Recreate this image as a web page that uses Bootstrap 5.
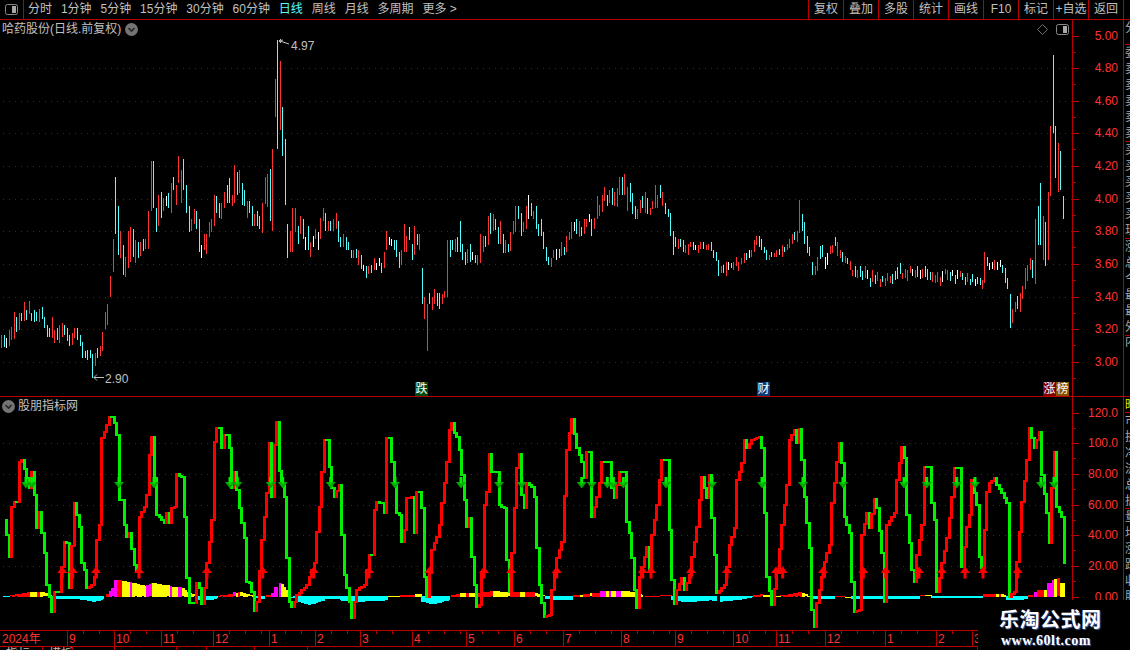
<!DOCTYPE html>
<html lang="zh-CN">
<head>
<meta charset="UTF-8">
<title>哈药股份</title>
<link href="https://cdn.jsdelivr.net/npm/bootstrap@5.3.3/dist/css/bootstrap.min.css" rel="stylesheet">
<style>
    html, body { background: #000; overflow: hidden; }
    body { font: 12px/1 "Liberation Sans", "Noto Sans CJK SC", sans-serif; color: #c0c0c0; }
    .app-root { width: 1130px; height: 650px; background: #000; }
    .tool-bar { height: 20px; border-bottom: 1px solid #b80000; }
    .corner-box { width: 24px; height: 19px; border-right: 1px solid #b80000; }
    .tool-item { line-height: 19px; white-space: nowrap; }
    .tool-left { gap: 8.9px; padding-left: 4px; }
    .tool-item.on { color: #54ffff; }
    .tool-right { margin-right: 6px; border-right: 1px solid #b80000; }
    .tool-btn { width: 35px; height: 19px; padding: 0; border: 0; border-left: 1px solid #b80000; border-radius: 0;
        font-size: 12px; line-height: 19px; color: #c0c0c0; background: #000; white-space: nowrap; }
    .price-pane { height: 377px; border-bottom: 1px solid #b80000; }
    .macd-pane { height: 234px; border-bottom: 1px solid #b80000; }
    .plot-wrap { width: 1073px; border-right: 1px solid #b80000; }
    .side-col { width: 7px; border-left: 1px solid #b80000; padding-left: 1px; overflow: hidden; white-space: nowrap; color: #a8a8a8; }
    .side-sec { border-bottom: 1px solid #b80000; overflow: hidden; }
    .side-sec div { height: 16px; line-height: 16px; }
    .side-head { color: #e6e600; }
    .pane-title { left: 2px; top: 3px; line-height: 13px; white-space: nowrap; }
    .round-tog { display: inline-block; vertical-align: -3px; margin-left: 4px; }
    .tog-first { margin: 0 3px 0 0; }
    .chart-icons { right: 3px; top: 4px; }
    .ev-tag { top: 362px; height: 14px; line-height: 14px; color: #fff; font-size: 12px; text-align: center; }
    .ev-cell { width: 13px; display: inline-block; vertical-align: top; }
    .ev-green { background: #004a10; }
    .ev-blue { background: #0a3c78; }
    .ev-red { background: #800000; }
    .ev-brown { background: #8a5000; }
    .date-row { width: 978px; height: 16px; border-bottom: 1px solid #b80000; }
    .stub-row { width: 978px; height: 4px; overflow: hidden; }
    .stub-cell { height: 4px; border-right: 1px solid #b80000; font-size: 12px; line-height: 14px; padding-left: 6px; overflow: hidden; white-space: nowrap; }
    .water-mark { left: 978px; top: 600px; width: 152px; height: 50px; background: #000; color: #fff; }
    .wm-cn { left: 21px; top: 7px; font: 700 20px/24px "Noto Sans CJK SC", sans-serif; letter-spacing: .5px; text-shadow: 1px 1px 1px #3a5a9a; white-space: nowrap; }
    .wm-en { left: 23px; top: 33px; font: 700 14px/16px "Liberation Serif", serif; letter-spacing: .5px; text-shadow: 1px 1px 1px #3a5a9a; white-space: nowrap; }
    svg text { font-family: "Liberation Sans", "Noto Sans CJK SC", sans-serif; font-size: 12px; }
</style>
</head>
<body>
<div class="app-root position-relative">
    <div class="tool-bar d-flex justify-content-between">
        <div class="d-flex">
            <div class="corner-box d-flex align-items-center justify-content-center">
                <svg width="13" height="11" viewBox="0 0 13 11"><rect x=".5" y=".5" width="12" height="10" rx="2" fill="#000" stroke="#8a8a8a"/><rect x="7" y="2" width="4" height="7" fill="#a8a8a8"/></svg>
            </div>
            <div class="d-flex tool-left">
                <span class="tool-item">分时</span>
                <span class="tool-item">1分钟</span>
                <span class="tool-item">5分钟</span>
                <span class="tool-item">15分钟</span>
                <span class="tool-item">30分钟</span>
                <span class="tool-item">60分钟</span>
                <span class="tool-item on">日线</span>
                <span class="tool-item">周线</span>
                <span class="tool-item">月线</span>
                <span class="tool-item">多周期</span>
                <span class="tool-item">更多 &gt;</span>
            </div>
        </div>
        <div class="d-flex tool-right">
            <button class="btn tool-btn">复权</button>
            <button class="btn tool-btn">叠加</button>
            <button class="btn tool-btn">多股</button>
            <button class="btn tool-btn">统计</button>
            <button class="btn tool-btn">画线</button>
            <button class="btn tool-btn">F10</button>
            <button class="btn tool-btn">标记</button>
            <button class="btn tool-btn">+自选</button>
            <button class="btn tool-btn">返回</button>
        </div>
    </div>

    <div class="price-pane d-flex">
        <div class="plot-wrap position-relative">
            <svg id="priceSvg" class="d-block" width="1072" height="376" viewBox="0 20 1072 376" shape-rendering="crispEdges"></svg>
            <div class="pane-title position-absolute">哈药股份(日线.前复权)<svg class="round-tog" width="13" height="13" viewBox="0 0 13 13"><circle cx="6.5" cy="6.5" r="6.5" fill="#747474"/><path d="M3.5 5l3 3 3-3" fill="none" stroke="#262626" stroke-width="1.6"/></svg></div>
            <div class="chart-icons position-absolute d-flex align-items-center gap-2">
                <svg width="11" height="11" viewBox="0 0 11 11"><path d="M5.5.5l5 5-5 5-5-5z" fill="none" stroke="#6e6e6e"/></svg>
                <svg width="13" height="11" viewBox="0 0 13 11"><rect x=".5" y=".5" width="12" height="10" rx="2" fill="#000" stroke="#8a8a8a"/><rect x="7" y="2" width="4" height="7" fill="#a8a8a8"/></svg>
            </div>
            <div class="ev-tag position-absolute" style="left:415px"><span class="ev-cell ev-green">跌</span></div>
            <div class="ev-tag position-absolute" style="left:757px"><span class="ev-cell ev-blue">财</span></div>
            <div class="ev-tag position-absolute" style="left:1043px"><span class="ev-cell ev-red">涨</span><span class="ev-cell ev-brown">榜</span></div>
        </div>
        <svg id="priceAxis" class="d-block" width="50" height="376" viewBox="1073 20 50 376" shape-rendering="crispEdges"></svg>
        <div class="side-col d-flex flex-column">
            <div class="side-sec" style="height:25px"><div>分笔</div></div>
            <div class="side-sec" style="height:97px"><div>委比</div><div>卖五</div><div>卖四</div><div>卖三</div><div>卖二</div><div>卖一</div></div>
            <div class="side-sec" style="height:97px"><div>买一</div><div>买二</div><div>买三</div><div>买四</div><div>买五</div><div>现价</div></div>
            <div class="side-sec" style="height:97px"><div>涨跌</div><div>总手</div><div>今开</div><div>最高</div><div>最低</div><div>外盘</div></div>
            <div><div>内盘</div></div>
        </div>
    </div>

    <div class="macd-pane d-flex">
        <div class="plot-wrap position-relative">
            <svg id="macdSvg" class="d-block" width="1072" height="233" viewBox="0 397 1072 233" shape-rendering="crispEdges"></svg>
            <div class="pane-title position-absolute"><svg class="round-tog tog-first" width="13" height="13" viewBox="0 0 13 13"><circle cx="6.5" cy="6.5" r="6.5" fill="#747474"/><path d="M3.5 5l3 3 3-3" fill="none" stroke="#262626" stroke-width="1.6"/></svg>股朋指标网</div>
        </div>
        <svg id="macdAxis" class="d-block" width="50" height="233" viewBox="1073 397 50 233" shape-rendering="crispEdges"></svg>
        <div class="side-col d-flex flex-column">
            <div class="side-sec" style="height:16px"><div class="side-head">昨收</div></div>
            <div class="side-sec" style="height:96px"><div>市盈</div><div>换手</div><div>净资</div><div>流通</div><div>总股</div><div>振幅</div></div>
            <div class="side-sec" style="height:96px"><div>量比</div><div>均价</div><div>涨停</div><div>跌停</div><div>收益</div><div>股本</div></div>
        </div>
    </div>

    <svg id="dateSvg" class="d-block date-row" width="978" height="16" viewBox="0 631 978 15" shape-rendering="crispEdges"></svg>
    <div class="stub-row d-flex">
        <div class="stub-cell" style="width:43px">指标</div>
        <div class="stub-cell" style="width:30px">模板</div>
        <div class="stub-cell" style="width:42px"></div>
        <div class="stub-cell" style="width:62px"></div>
        <div class="stub-cell" style="width:30px"></div>
        <div class="stub-cell" style="width:48px"></div>
        <div class="stub-cell" style="width:53px"></div>
        <div class="stub-cell" style="width:670px"></div>
    </div>

    <div class="water-mark position-absolute">
        <div class="wm-cn position-absolute">乐淘公式网</div>
        <div class="wm-en position-absolute">www.60lt.com</div>
    </div>
</div>

<script src="https://cdn.jsdelivr.net/npm/bootstrap@5.3.3/dist/js/bootstrap.bundle.min.js"></script>
<script>
    const RED = '#ff3232', CYAN = '#54ffff', WHITE = '#ffffff', LINE = '#b80000', GRID = '#a00000';
    const stickColor = { r: RED, c: CYAN, w: WHITE };

    // 价格柱：读自截图，"x 色 上-下"，坐标按放大 3 倍记
    function readBars(text, x0, y0) {
        return text.trim().split(/\s+/).map(t => {
            const m = t.match(/(\d+)([rcw])(\d+)-(\d+)/);
            return { x: Math.floor(+m[1] / 3 + x0), top: +m[3] / 3 + y0, bot: +m[4] / 3 + y0, c: stickColor[m[2]] };
        });
    }

    const barsA = readBars(`3r165-205 12c165-200 18w175-205 27r150-198 33r142-180 42r97-178 48c110-155 57r100-150 63c100-125 72r65-122 78c90-120 87r63-102 93c100-125 102c90-125 108c97-125 117r87-125 126c82-118 132c110-142 141c135-172 147c145-173 156r112-175 162r150-188 171c145-180 177r135-190 186r130-172 192c135-165 201c145-185 207c165-198 216r160-195 222r145-175 231c145-180 240c165-198 246c185-233 255c213-235 261c210-240 270c210-235 276c222-295 285r220-260 291c205-235 300r198-228 306r155-212`, 0, 280);
    const barsB = readBars(`45r845-895 52r822-885 60r738-800 70r628-728 76c440-610 85c528-675 91r603-683 100c645-735 106r682-743 115r603-713 121r590-695 130c597-682 136r630-698 145c635-683 151r637-680 160c628-665 166r628-657 175r543-657 184r393-543 190c393-535 199c533-605 205r495-587 214c487-565 220r505-545 229w498-527 235c490-535 244r458-548 250c440-480 259r465-525 265r378-458 274r420-518 280c387-480 289c465-550 298c528-605 304r567-603 313r538-582 319c543-597 328c567-665 334w645-683 343r612-660 349r612-673 358r575-620 364r567-605 373r495-587 379c498-550 388c520-565 394r520-567 403r487-535 412c465-520 418c443-518 427r495-527 433r405-520 442c427-497 448r420-490 457c460-525 463c480-527 472r513-563 478c513-550 487c528-587 493r552-587 502c543-587 508c558-597 517r520-610 526r440-520 532r433-533 541c418-573 547r357-603 556r148-263 562c30-357 571r93-300 577c232-378 586c328-525 592c582-683 601r603-665 607r535-668 616r535-607 625c588-642 631r558-612 640c567-628 646w620-660 655c588-660 661r635-680 670w618-650 676r597-627 685w605-660 691r565-627 700r535-575 706c550-603 715r573-603 721c573-603 730r567-603 739r548-597 745c573-635 751c620-650 760r612-650 769c622-660 775c635-660 784c660-683 790r660-683 799c657-683 805r660-705 814c675-718 820w705-723 829c708-743 835r708-733 844c705-730 853r683-720 859w698-720 868w683-708 874c698-728 883r665-713 889r603-660 898w622-647 904w628-650 913c630-660 919c630-680 928c665-713 934r660-705 943r582-665 949r618-665 958c590-630 967c642-690 973r588-675 982c612-645 988r612-660 997c714-822 1003r800-867 1012r822-963 1018c790-822 1027r800-838 1033r777-822 1042c790-828 1048c790-837 1057r793-822 1063r783-803 1072r630-800 1081c630-680 1087c630-660 1096r628-665 1102c622-667`, 90, 30);
    const barsC = readBars(`16r237-275 22c232-275 31c183-275 37c252-300 46c277-315 52r267-308 61c252-305 67w277-300 76c285-310 82r285-315 91r222-310 100r228-275 106c228-262 115r168-255 121c160-222 130r163-215 136c178-212 145c202-252 151r183-252 160c222-278 166r240-278 175c252-275 181r217-275 190r183-222 196r138-217 205c138-178 214c160-228 220r187-217 229r138-207 235w105-177 244c130-168 250r153-177 259c138-207 265c193-228 274c178-228 280c217-267 289c262-305 295c292-315 304r295-323 310r270-295 319w267-300 328c267-295 334r247-290 343c262-285 349r228-275 358r215-240 364r187-237 373w187-213 379c178-222 388r183-230 394c202-228 403r178-222 409r178-202 418w162-187 424c178-228 433r175-207 442r108-177 448r135-168 457r105-155 463r82-123 472c105-138 478r90-130 487c85-135 493r97-138 502r85-143 508r52-105 517c52-107 523r42-105 532r82-153 541c70-128 547c100-162 556c138-177 562r148-177 571r120-160 577c108-143 586r97-160 592c115-162 601r145-167 607r123-148 616r75-143 622r105-143 631c75-113 637r97-138 646c130-162 655c148-172 661c160-228 670c213-285 676c232-262 685r237-267 691c237-262 700c240-275 706r255-280 715r252-285 721r247-262 730c247-270 736w255-270 745r255-280 751r247-268 760c247-268 769r255-270 775r252-270 784c247-275 790c270-295 799c277-305 805c300-347 814r318-338 820c315-340 829r307-348 835w307-332 844c310-325 850r307-330 859r292-318 865r307-333 874r293-310 883r280-310 889c280-300 898w270-293 904r270-292 913r240-275 919r228-255 928c228-262 934c237-270 943c262-280 949c270-300 958r285-300 964c277-293 973r280-293 979r270-292 988c267-285 997r255-290 1003c262-277 1012r252-270 1018r237-265 1027r222-252 1033c217-240 1042r213-247 1048r120-220 1057c162-213 1063c187-252 1072c228-278 1078c262-290 1087c305-345 1096r318-345 1102r292-333`, 450, 160);
    const barsE = readBars(`7r720-747 13r636-728 22c652-678 28w670-690 37w665-685 43r660-690 52w665-690 61w660-680 67c675-698 76c685-730 82c715-747 91c762-863 97r807-848 106r785-815 112c768-807 121r758-815 127r738-778 136r683-745 142r675-722 151r655-690 157c660-713 166r537-732 175c497-614 181c430-615 190r528-660 196c546-678 205r456-660 211r258-467 220c45-280 226c258-413 235r310-458 241c333-450 250c468-537`, 980, 40);

    // 820 到 981 这一段只按包络走
    const envelope = [[820, 238, 268], [825, 246, 272], [830, 238, 264], [835, 234, 262], [840, 243, 268], [845, 252, 272], [850, 258, 277], [855, 262, 283], [860, 264, 285], [865, 262, 283], [870, 266, 288], [880, 272, 290], [885, 274, 289], [890, 270, 288], [900, 258, 283], [905, 264, 283], [915, 264, 283], [925, 262, 283], [935, 272, 290], [945, 266, 285], [955, 268, 285], [965, 268, 288], [975, 272, 292], [981, 277, 292]];
    let seed = 17;
    const rnd = () => (seed = (seed * 1103 + 12345) % 65536) / 65536;
    const barsD = [];
    for (let x = 820; x < 982; x += 2.5) {
        let k = 0;
        while (k < envelope.length - 2 && envelope[k + 1][0] < x) k++;
        const a = envelope[k], b = envelope[k + 1], f = (x - a[0]) / (b[0] - a[0]);
        const top = a[1] + (b[1] - a[1]) * f, bot = a[2] + (b[2] - a[2]) * f;
        const pick = rnd();
        const len = (bot - top) * (.28 + rnd() * .3);
        const start = top + (.1 + rnd() * .8) * (bot - top - len);
        barsD.push({ x: Math.floor(x), top: start, bot: start + len, c: pick < .45 ? RED : pick < .92 ? CYAN : WHITE });
    }

    const rectTag = (x, y, w, h, fill) => `<rect x="${x}" y="${y}" width="${w}" height="${h}" fill="${fill}"/>`;
    const gridTag = y => `<line x1="3" x2="1072" y1="${y + .5}" y2="${y + .5}" stroke="${GRID}" stroke-dasharray="1 5"/>`;

    // 主图
    const priceY = p => Math.round(68.3 + (4.8 - p) * 163);
    let priceHtml = '';
    [4.8, 4.6, 4.4, 4.2, 4.0, 3.8, 3.6, 3.4, 3.2, 3.0].forEach(p => priceHtml += gridTag(priceY(p)));
    [...barsA, ...barsB, ...barsC, ...barsD, ...barsE].forEach(b => {
        priceHtml += rectTag(b.x, Math.round(b.top), 1, Math.max(2, Math.round(b.bot - b.top)), b.c);
    });
    priceHtml += `<g shape-rendering="auto" stroke="#c0c0c0" fill="none">
        <path d="M279 41l4 -1M281 39l-2 2 2 2M279 41l4 1 6 2"/>
        <path d="M94 377.5h10M97 374.5l-3 3 3 3"/></g>
        <text x="291" y="50" fill="#c0c0c0" shape-rendering="auto">4.97</text>
        <text x="105" y="383" fill="#c0c0c0" shape-rendering="auto">2.90</text>`;
    document.getElementById('priceSvg').innerHTML = priceHtml;

    // 主图坐标轴
    let axisHtml = '';
    [5.0, 4.8, 4.6, 4.4, 4.2, 4.0, 3.8, 3.6, 3.4, 3.2, 3.0].forEach(p => {
        const y = priceY(p);
        axisHtml += rectTag(1073, y, 6, 1, LINE) + rectTag(1073, y + 16, 3, 1, LINE);
        axisHtml += `<text x="1118" y="${y + 4}" text-anchor="end" fill="${RED}">${p.toFixed(2)}</text>`;
    });
    document.getElementById('priceAxis').innerHTML = axisHtml;

    // 副图折线，关键点同样是放大 3 倍的读数：三段各有 x 偏移
    const lineA = [[12,360],[18,405],[27,470],[30,430],[33,320],[42,305],[45,250],[48,305],[57,185],[66,180],[75,170],[80,235],[88,265],[93,215],[100,285],[108,310],[110,385],[118,335],[127,335],[130,460],[135,555],[143,590],[150,635],[158,645],[163,575],[178,575],[180,500],[187,427],[200,430],[205,510],[208,565],[217,490],[223,310],[232,310],[236,380],[241,490],[250,510],[257,565],[270,555],[278,530],[287,420],[296,375],[300,280],[305,115],[315,115],[318,75],[323,50],[332,50],[337,70],[345,105],[355,300],[363,300],[372,375],[380,410],[388,400],[400,395],[404,495],[408,515],[418,350],[430,320],[438,285],[445,165],[453,110],[460,110],[463,235],[469,345],[478,350],[487,370],[496,340],[505,368],[514,325],[522,320],[530,222],[540,232],[549,350],[558,535],[567,610],[577,610],[585,548],[595,565],[600,613],[610,565],[620,490],[630,360],[640,125],[650,85],[659,85],[662,143],[670,105],[680,105],[688,143],[695,265],[700,215],[712,220],[716,325],[728,325],[732,415],[735,545],[745,550],[755,575],[758,630],[763,632],[768,605],[780,610],[786,420],[797,280],[803,130],[810,130],[815,290],[820,135],[827,65],[833,65],[838,212],[848,195],[853,290],[857,290],[860,475],[865,605],[875,622],[880,605],[890,585],[900,570],[915,555],[925,530],[940,490],[947,395],[955,320],[962,215],[970,120],[978,120],[982,155],[987,200],[995,265],[1002,290],[1012,255],[1020,255],[1023,405],[1027,525],[1035,565],[1043,605],[1055,655],[1060,605],[1070,570]];
    const lineB = [[12,555],[25,465],[35,465],[44,330],[50,305],[60,310],[68,338],[75,115],[88,115],[92,135],[96,185],[104,250],[110,340],[118,345],[122,425],[127,390],[136,295],[155,292],[160,400],[165,275],[175,275],[180,325],[186,325],[188,530],[195,590],[205,520],[215,450],[225,410],[235,375],[245,310],[255,185],[262,90],[272,70],[280,100],[290,110],[298,150],[307,300],[317,380],[326,355],[332,355],[335,470],[340,555],[347,620],[358,615],[362,515],[372,315],[380,275],[387,162],[393,215],[405,180],[410,215],[415,315],[430,325],[435,480],[445,575],[453,460],[462,325],[468,205],[478,162],[485,285],[492,325],[500,250],[510,262],[520,290],[530,445],[538,555],[545,610],[553,650],[565,645],[575,570],[580,520],[590,475],[605,425],[618,150],[628,100],[636,58],[648,48],[651,143],[660,185],[668,235],[680,155],[688,155],[695,350],[705,290],[715,250],[725,185],[745,185],[750,265],[762,295],[772,215],[790,215],[795,365],[803,400],[812,475],[820,570],[828,625],[838,530],[855,442],[862,510],[875,405],[887,315],[893,240],[905,180],[915,180],[925,390],[932,540],[940,612],[947,570],[960,535],[970,570],[985,525],[995,470],[1005,380],[1015,300],[1025,230],[1035,295],[1043,225],[1053,195],[1055,355],[1062,465],[1070,580]];
    const lineC = [[8,555],[15,500],[25,435],[38,465],[40,385],[50,240],[60,190],[72,120],[80,145],[90,195],[95,120],[118,112],[125,145],[135,370],[140,530],[150,570],[155,615],[165,520],[180,495],[183,375],[195,255],[205,120],[222,90],[225,130],[238,88],[243,180],[252,290],[262,445],[270,630],[280,680],[290,610],[300,530],[310,485],[322,435],[335,310],[345,185],[358,130],[365,190],[372,350],[382,400],[390,545],[400,635],[415,630],[425,405],[435,340],[445,385],[460,298],[470,325],[480,460],[490,605],[500,375],[520,340],[530,240],[540,140],[550,175],[560,345],[570,510],[582,545],[590,465],[605,375],[612,200],[622,200],[630,310],[640,360],[650,575],[660,490],[680,415],[690,290],[700,205],[712,205],[720,475],[725,500],[735,380],[745,345],[752,240],[765,193],[770,315],[778,470],[785,505],[795,275],[805,250],[818,235],[830,255],[845,280],[855,310],[865,590],[880,575],[895,395],[905,305],[915,180],[925,85],[937,68],[942,145],[955,95],[965,225],[975,340],[985,430],[990,265],[1000,155],[1010,320],[1020,350],[1030,415],[1032,488]];

    const barOf = x => Math.round((x - 1) / 2.5);
    const barX = i => Math.ceil(1 + 2.5 * i);
    const series = [];
    const addKeys = (keys, off) => keys.forEach(k => { series[barOf(k[0] / 3 + off)] = k[1] / 3 + 400; });
    addKeys(lineA, 0); addKeys(lineB, 360); addKeys(lineC, 720);
    let last = -1;
    for (let i = 0; i < series.length; i++) {
        if (series[i] === undefined) continue;
        if (last >= 0) for (let j = last + 1; j < i; j++) series[j] = series[last] + (series[i] - series[last]) * (j - last) / (i - last);
        last = i;
    }

    // 柱体：[x0, x1, y0, y1, 色]，同样是放大读数
    const M = '#ff00ff', Y = '#ffff00', R = '#ff0000', B = '#00ffff';
    const histA = [[10,30,588,589,B],[30,90,586,575,R],[90,113,575,575,Y],[113,122,576,576,R],[122,135,576,578,Y],[135,155,580,588,Y],[155,200,595,597,B],[200,225,598,596,B],[225,280,597,605,B],[280,312,605,598,B],[318,327,582,582,R],[327,342,572,558,M],[342,352,540,540,M],[352,366,540,540,R],[366,390,542,546,Y],[390,396,546,546,M],[396,440,548,560,Y],[440,456,555,550,M],[456,510,548,558,Y],[510,516,558,558,M],[516,534,560,560,Y],[534,546,560,560,M],[546,560,565,573,Y],[560,595,575,588,Y],[595,635,600,600,B],[635,655,600,590,B],[655,700,587,580,R],[700,708,577,577,M],[708,716,578,578,Y],[716,722,576,576,R],[722,750,577,585,Y],[750,765,586,588,Y],[765,795,595,596,B],[798,815,585,585,R],[815,822,578,578,M],[822,833,560,560,M],[838,845,548,548,M],[845,857,552,565,Y],[857,868,570,582,Y],[873,890,590,602,B],[890,925,605,614,B],[925,940,614,612,B],[940,975,612,600,B],[975,1000,598,596,B],[1000,1025,596,600,B],[1025,1080,604,605,B]];
    const histB = [[0,75,605,602,B],[75,85,600,590,B],[85,120,587,587,Y],[120,165,585,585,R],[165,185,582,582,Y],[185,215,605,613,B],[215,270,613,600,B],[275,300,585,580,R],[302,320,579,579,Y],[320,328,579,579,R],[328,355,579,579,Y],[355,400,578,573,R],[400,420,573,573,Y],[420,450,575,578,Y],[450,480,576,576,R],[480,495,576,576,Y],[495,525,576,576,R],[525,555,580,588,Y],[555,640,598,600,B],[640,660,585,585,R],[660,670,585,585,Y],[670,690,582,582,R],[690,698,580,580,Y],[698,722,578,578,R],[722,738,573,573,M],[738,747,573,573,Y],[747,755,573,573,M],[755,768,573,573,Y],[768,783,573,573,M],[783,810,573,573,Y],[810,830,575,578,Y],[830,850,582,585,Y],[855,935,587,586,R],[935,980,600,607,B],[980,1050,607,601,B],[1050,1070,601,604,B]];
    const histC = [[0,50,605,600,B],[50,100,600,590,B],[100,130,584,583,R],[130,155,585,585,Y],[155,165,578,578,R],[165,182,588,588,Y],[182,248,586,575,R],[248,272,578,595,Y],[272,345,597,597,B],[345,375,587,587,R],[375,395,590,590,Y],[395,600,598,597,B],[600,615,586,586,R],[615,635,586,586,Y],[635,790,594,594,B],[790,830,582,582,R],[830,838,582,582,Y],[838,843,582,582,R],[843,860,582,588,Y],[860,925,600,598,B],[925,940,585,585,R],[942,952,575,575,M],[952,972,570,568,R],[972,982,570,570,Y],[982,996,548,548,M],[996,1002,540,540,M],[1002,1012,537,537,Y],[1012,1020,535,535,R],[1020,1035,548,548,Y]];

    const zeroY = 596.7;
    let macdHtml = '';
    [100, 80, 60, 40, 20].forEach(v => macdHtml += gridTag(Math.round(zeroY - v * 1.535)));
    [[histA, 0], [histB, 360], [histC, 720]].forEach(([list, off]) => {
        list.forEach(([x0, x1, y0, y1, col]) => {
            for (let x = x0; x < x1; x += 7.5) {
                const px = Math.floor(x / 3 + off);
                const y = (y0 + (y1 - y0) * (x - x0) / (x1 - x0)) / 3 + 400;
                const w = Math.ceil((Math.min(x + 7.5, x1) - x) / 3);
                macdHtml += y < zeroY ? rectTag(px, Math.round(y), w, Math.max(1, Math.round(zeroY - y)), col) : rectTag(px, 596, w, Math.max(1, Math.round(y - 596)), col);
            }
        });
    });

    // 三像素宽的阶梯线，涨红跌绿，后画的盖前面
    for (let i = 1; i < series.length; i++) {
        if (series[i] === undefined || series[i - 1] === undefined) continue;
        const a = series[i - 1], b = series[i];
        const top = Math.round(Math.min(a, b)) - 1, bot = Math.round(Math.max(a, b)) + 1;
        macdHtml += rectTag(barX(i) - 1, top, 3, bot - top, b < a ? '#ff0000' : '#00f000');
    }

    // 箭头
    const downX = [26, 31.7, 119, 154, 230, 237.3, 270.7, 282.7, 330.7, 395, 461, 499, 521.7, 581.7, 591.7, 607.3, 613.3, 623.3, 666, 712, 762, 803, 843, 904, 926.7, 956.7, 975, 1041, 1054];
    const upX = [62.3, 72.7, 96, 139, 207, 262.7, 313.7, 369, 429.3, 511, 484, 556.7, 642.7, 651, 691, 727, 776, 782.7, 823, 863.3, 885.7, 919, 941.7, 965, 983, 1017.7];
    const arrows = downX.map(x => `<rect x="${x - 1.5}" y="477" width="3" height="6" fill="#00f000"/><path d="M${x - 5} 482h10l-5 6.500z" fill="#00a800"/><path d="M${x - 2} 482h4l-2 3z" fill="#00d800"/>`)
        .concat(upX.map(x => `<path d="M${x} 566.500l5 6.500h-3.500v5.500h-3v-5.500h-3.500z" fill="#ff0000"/>`));
    macdHtml += `<g shape-rendering="auto">${arrows.join('')}</g>`;
    document.getElementById('macdSvg').innerHTML = macdHtml;

    // 副图坐标轴
    let macdAxis = '';
    [[120, '120.0'], [100, '100.0'], [80, '80.00'], [60, '60.00'], [40, '40.00'], [20, '20.00'], [0, '0.00']].forEach(([v, label]) => {
        const y = Math.round(zeroY - v * 1.535);
        macdAxis += rectTag(1073, y, 6, 1, LINE);
        if (v > 0) macdAxis += rectTag(1073, y + 15, 3, 1, LINE);
        macdAxis += `<text x="1118" y="${y + 4}" text-anchor="end" fill="${RED}">${label}</text>`;
    });
    document.getElementById('macdAxis').innerHTML = macdAxis;

    // 日期轴
    const months = [[67, '9'], [114, '10'], [161, '11'], [213, '12'], [269, '1'], [315, '2'], [360, '3'], [412, '4'], [466, '5'], [514, '6'], [563, '7'], [621, '8'], [675, '9'], [733, '10'], [776, '11'], [825, '12'], [885, '1'], [936, '2'], [972, '3']];
    let dateHtml = `<text x="2" y="643" fill="${RED}" shape-rendering="auto">2024年</text>`;
    months.forEach(([x, label], idx) => {
        dateHtml += rectTag(x, 631, 1, 15, LINE);
        dateHtml += `<text x="${x + 2}" y="643" fill="${RED}" shape-rendering="auto">${label}</text>`;
        const nextX = idx + 1 < months.length ? months[idx + 1][0] : 978;
        for (let t = x + 16; t < nextX - 4; t += 16) dateHtml += rectTag(t, 631, 1, 3, LINE);
    });
    document.getElementById('dateSvg').innerHTML = dateHtml;
</script>
</body>
</html>
